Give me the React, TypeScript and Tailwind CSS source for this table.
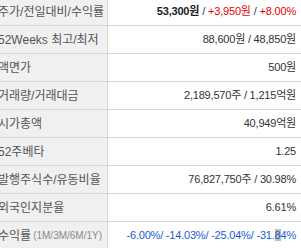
const rows: { label: React.ReactNode; value: React.ReactNode }[] = [
  {
    label: "주가/전일대비/수익률",
    value: (
      <>
        <b className="font-bold text-[#222]">53,300원</b>
        <span className="mx-[3px]">/</span>
        <span className="text-[#e60000]">+3,950원</span>
        <span className="mx-[3px]">/</span>
        <span className="text-[#e60000]">+8.00%</span>
      </>
    ),
  },
  { label: "52Weeks 최고/최저", value: "88,600원 / 48,850원" },
  { label: "액면가", value: "500원" },
  { label: "거래량/거래대금", value: "2,189,570주 / 1,215억원" },
  { label: "시가총액", value: "40,949억원" },
  { label: "52주베타", value: "1.25" },
  { label: "발행주식수/유동비율", value: "76,827,750주 / 30.98%" },
  { label: "외국인지분율", value: "6.61%" },
  {
    label: (
      <>
        수익률 <span className="ml-[2px] text-[10px] text-[#8a8a8a]">(1M/3M/6M/1Y)</span>
      </>
    ),
    value: (
      <span className="text-[#1a5cd6]">
        -6.00%/ -14.03%/ -25.04%/ -31.<span className="bg-[#bdbdbd]">8</span>4%
      </span>
    ),
  },
];

export default function App() {
  return (
    <div className="w-[301px] h-[248px] overflow-hidden bg-white">
      <div
        className="mt-[-2px] ml-[-8px] text-[#333]"
        style={{ fontFamily: '"Liberation Sans", "Noto Sans CJK KR", sans-serif' }}
      >
        {rows.map((r, i) => (
          <div key={i} className="flex h-[28px] border-b border-[#d6d6d6]">
            <div className="w-[116px] shrink-0 bg-[#f0f0f0] border-r border-[#d6d6d6] pl-[6px] flex items-center text-[12px] text-[#555] whitespace-nowrap">
              {r.label}
            </div>
            <div className="flex-1 flex items-center justify-end pr-[5px] text-[11px] tracking-[-0.2px] whitespace-nowrap">
              {r.value}
            </div>
          </div>
        ))}
      </div>
    </div>
  );
}
